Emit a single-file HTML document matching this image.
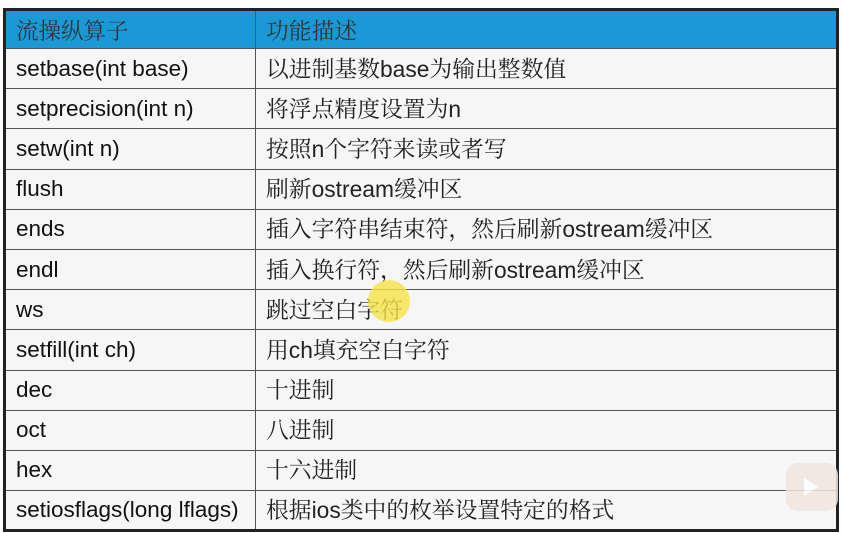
<!DOCTYPE html>
<html><head><meta charset="utf-8"><style>
body{margin:0;width:842px;height:533px;background:#fdfdfd;overflow:hidden;position:relative}
table{position:absolute;left:3px;top:8px;width:836px;border-collapse:collapse;border:3px solid #222;background:#f6f6f6}
tr{height:40.2px}
tr.h{height:39px}
td{border:1.5px solid #555;padding:0 0 0 10px;font-family:"Liberation Sans","Noto Serif CJK SC",sans-serif;font-size:22.5px;line-height:26px;color:#111;white-space:nowrap;vertical-align:middle}
td.c{font-family:"Liberation Sans","Noto Serif CJK SC",serif;color:#222;font-size:22.8px}
tr.h td{background:#199ad6;color:#333;font-family:"Noto Serif CJK SC",serif}
td:first-child{width:239px}
.bili{position:absolute;left:786px;top:463px;width:52px;height:48px;background:#efe6de;border-radius:12px;opacity:.85}
</style></head><body>
<table>
<tr class="h"><td>流操纵算子</td><td class="c">功能描述</td></tr>
<tr><td>setbase(int base)</td><td class="c">以进制基数base为输出整数值</td></tr>
<tr><td>setprecision(int n)</td><td class="c">将浮点精度设置为n</td></tr>
<tr><td>setw(int n)</td><td class="c">按照n个字符来读或者写</td></tr>
<tr><td>flush</td><td class="c">刷新ostream缓冲区</td></tr>
<tr><td>ends</td><td class="c">插入字符串结束符，然后刷新ostream缓冲区</td></tr>
<tr><td>endl</td><td class="c">插入换行符，然后刷新ostream缓冲区</td></tr>
<tr><td>ws</td><td class="c">跳过空白字符</td></tr>
<tr><td>setfill(int ch)</td><td class="c">用ch填充空白字符</td></tr>
<tr><td>dec</td><td class="c">十进制</td></tr>
<tr><td>oct</td><td class="c">八进制</td></tr>
<tr><td>hex</td><td class="c">十六进制</td></tr>
<tr><td>setiosflags(long lflags)</td><td class="c">根据ios类中的枚举设置特定的格式</td></tr>
</table>
<div style="position:absolute;left:368px;top:280px;width:42px;height:42px;border-radius:50%;background:#f5e24a;opacity:.8"></div>
<div class="bili"><svg width="52" height="48"><path d="M18 15 L32 24 L18 33 Z" fill="#fff"/></svg></div>
</body></html>
